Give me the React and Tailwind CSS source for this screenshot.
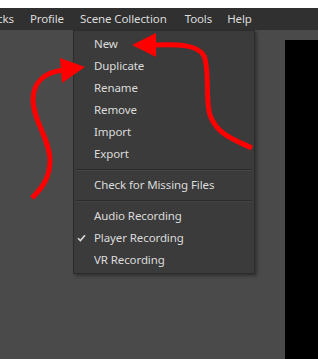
import React from "react";

const items1 = ["New", "Duplicate", "Rename", "Remove", "Import", "Export"];
const items3 = [
  { t: "Audio Recording" },
  { t: "Player Recording", c: true },
  { t: "VR Recording" },
];

function Row({ t, c }) {
  return (
    <div className="h-[22px] flex items-center relative pl-[20px]">
      {c && (
        <svg className="absolute left-[3px] top-[7px]" width="9" height="8" viewBox="0 0 9 8">
          <path d="M1 4.2 L3.4 6.6 L8 1.2" stroke="#dcdcdc" strokeWidth="1.6" fill="none" />
        </svg>
      )}
      <span>{t}</span>
    </div>
  );
}

function Sep() {
  return (
    <div className="pt-[4px] pb-[3px] px-[2px]">
      <div className="h-[1px] bg-[#2a2a2a]" />
      <div className="h-[1px] bg-[#454545]" />
    </div>
  );
}

export default function App() {
  return (
    <div
      className="w-[318px] h-[359px] relative overflow-hidden bg-[#4a4a4a] text-[11.5px] tracking-[-0.1px] text-[#dcdcdc]"
      style={{ fontFamily: '"Noto Sans", sans-serif' }}
    >
      <div className="h-[8px] bg-white" />
      <div className="h-[22px] bg-[#303030] flex items-center whitespace-nowrap">
        <span className="ml-[-3px] mr-[16px]">cks</span>
        <span className="mr-[16px]">Profile</span>
        <span className="mr-[18px]">Scene Collection</span>
        <span className="mr-[15px]">Tools</span>
        <span>Help</span>
      </div>
      <div className="flex h-[329px]">
        <div className="flex-1" />
        <div className="w-[33px] mt-[10px] bg-black" />
      </div>

      <div className="absolute left-[73px] top-[30px] w-[182px] bg-[#3b3b3b] border border-[#2c2c2c] shadow-[2px_2px_3px_rgba(0,0,0,0.35)] pt-[2px] pb-[2px]">
        {items1.map((t) => (
          <Row key={t} t={t} />
        ))}
        <Sep />
        <Row t="Check for Missing Files" />
        <Sep />
        {items3.map((r) => (
          <Row key={r.t} t={r.t} c={r.c} />
        ))}
      </div>

      <svg className="absolute left-0 top-0" width="318" height="359" viewBox="0 0 318 359">
        <path
          d="M152 45 C175 44 198 44 204 56 C210 70 205 100 210 115 C217 135 235 140 252 148"
          stroke="#ff0000"
          strokeWidth="5"
          fill="none"
        />
        <polygon points="132,45 156,33 156,57" fill="#ff0000" />
        <path
          d="M64 70 C45 72 33 82 33 100 C33 120 50 140 50 160 C50 178 42 188 32 198"
          stroke="#ff0000"
          strokeWidth="5"
          fill="none"
        />
        <polygon points="85,67 60,58 62,83" fill="#ff0000" />
      </svg>
    </div>
  );
}
